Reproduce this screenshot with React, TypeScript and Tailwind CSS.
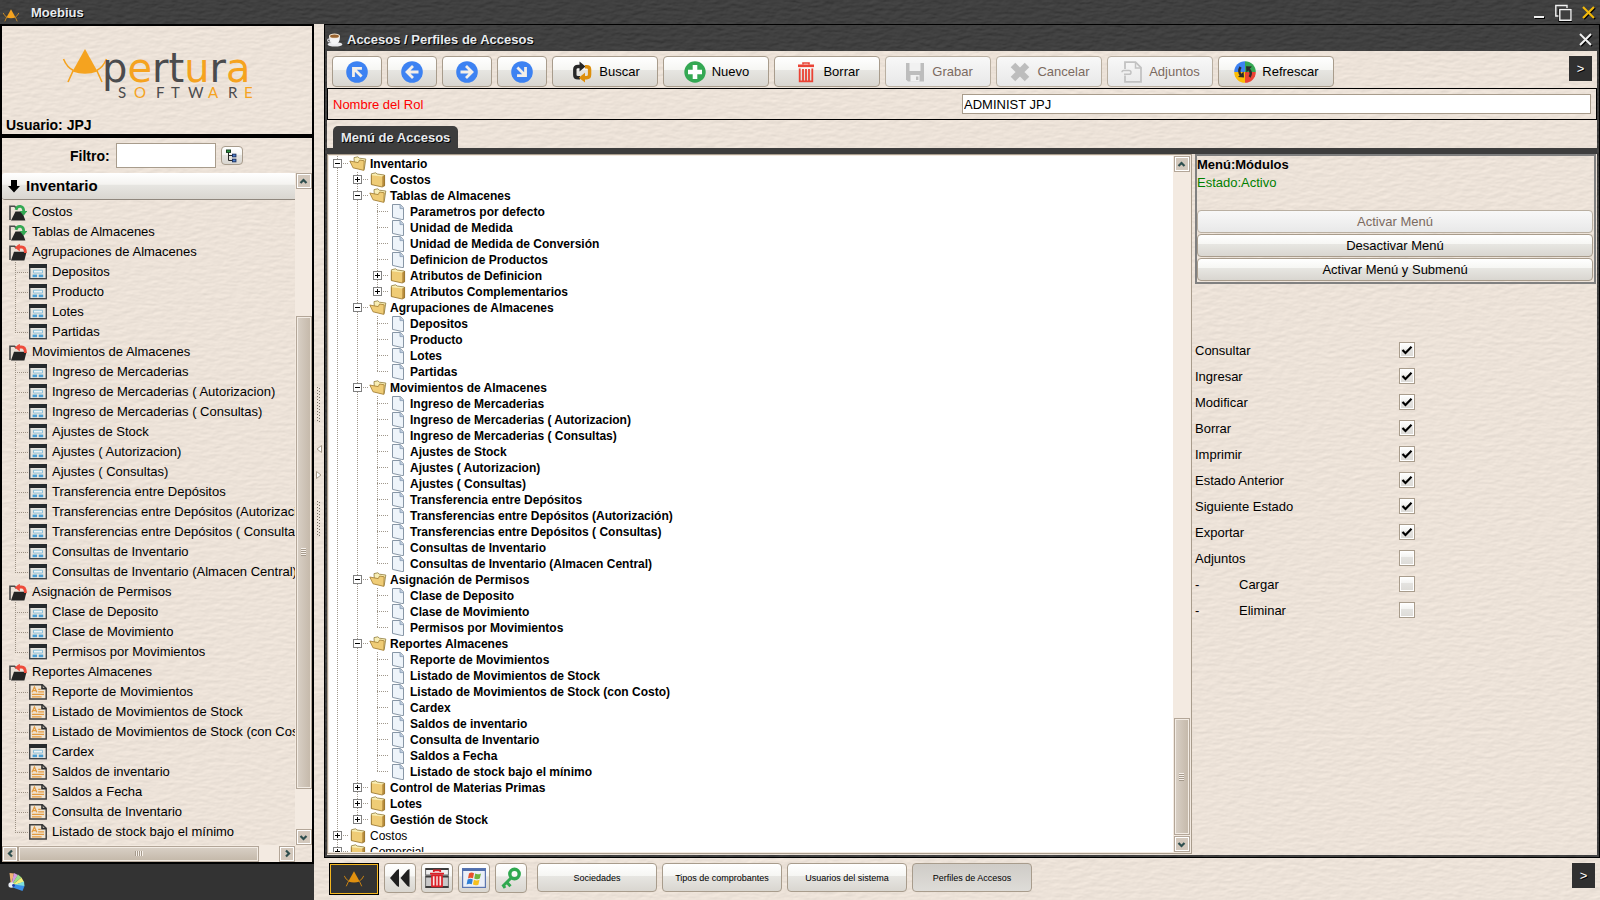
import type { ReactNode } from "react";
import clsx from "clsx";

type SideKind = "closed" | "open" | "form" | "report";
type SideItem = { label: string; kind: SideKind; last?: boolean };

const SIDE_ITEMS: SideItem[] = [
  { label: "Costos", kind: "closed" },
  { label: "Tablas de Almacenes", kind: "closed" },
  { label: "Agrupaciones de Almacenes", kind: "open" },
  { label: "Depositos", kind: "form" },
  { label: "Producto", kind: "form" },
  { label: "Lotes", kind: "form" },
  { label: "Partidas", kind: "form", last: true },
  { label: "Movimientos de Almacenes", kind: "open" },
  { label: "Ingreso de Mercaderias", kind: "form" },
  { label: "Ingreso de Mercaderias ( Autorizacion)", kind: "form" },
  { label: "Ingreso de Mercaderias ( Consultas)", kind: "form" },
  { label: "Ajustes de Stock", kind: "form" },
  { label: "Ajustes ( Autorizacion)", kind: "form" },
  { label: "Ajustes ( Consultas)", kind: "form" },
  { label: "Transferencia entre Depósitos", kind: "form" },
  { label: "Transferencias entre Depósitos (Autorización)", kind: "form" },
  { label: "Transferencias entre Depósitos ( Consultas)", kind: "form" },
  { label: "Consultas de Inventario", kind: "form" },
  { label: "Consultas de Inventario (Almacen Central)", kind: "form", last: true },
  { label: "Asignación de Permisos", kind: "open" },
  { label: "Clase de Deposito", kind: "form" },
  { label: "Clase de Movimiento", kind: "form" },
  { label: "Permisos por Movimientos", kind: "form", last: true },
  { label: "Reportes Almacenes", kind: "open" },
  { label: "Reporte de Movimientos", kind: "report" },
  { label: "Listado de Movimientos de Stock", kind: "report" },
  { label: "Listado de Movimientos de Stock (con Costo)", kind: "report" },
  { label: "Cardex", kind: "form" },
  { label: "Saldos de inventario", kind: "report" },
  { label: "Saldos a Fecha", kind: "report" },
  { label: "Consulta de Inventario", kind: "report" },
  { label: "Listado de stock bajo el mínimo", kind: "report", last: true },
  { label: "Control de Materias Primas", kind: "closed" },
];

type TreeNode = { label: string; folder?: boolean; plain?: boolean; children?: TreeNode[] };

const leaves = (...labels: string[]): TreeNode[] => labels.map((label) => ({ label }));

const TREE: TreeNode[] = [
  {
    label: "Inventario",
    folder: true,
    children: [
      { label: "Costos", folder: true },
      {
        label: "Tablas de Almacenes",
        folder: true,
        children: [
          ...leaves("Parametros por defecto", "Unidad de Medida", "Unidad de Medida de Conversión", "Definicion de Productos"),
          { label: "Atributos de Definicion", folder: true },
          { label: "Atributos Complementarios", folder: true },
        ],
      },
      { label: "Agrupaciones de Almacenes", folder: true, children: leaves("Depositos", "Producto", "Lotes", "Partidas") },
      {
        label: "Movimientos de Almacenes",
        folder: true,
        children: leaves(
          "Ingreso de Mercaderias",
          "Ingreso de Mercaderias ( Autorizacion)",
          "Ingreso de Mercaderias ( Consultas)",
          "Ajustes de Stock",
          "Ajustes ( Autorizacion)",
          "Ajustes ( Consultas)",
          "Transferencia entre Depósitos",
          "Transferencias entre Depósitos (Autorización)",
          "Transferencias entre Depósitos ( Consultas)",
          "Consultas de Inventario",
          "Consultas de Inventario (Almacen Central)",
        ),
      },
      {
        label: "Asignación de Permisos",
        folder: true,
        children: leaves("Clase de Deposito", "Clase de Movimiento", "Permisos por Movimientos"),
      },
      {
        label: "Reportes Almacenes",
        folder: true,
        children: leaves(
          "Reporte de Movimientos",
          "Listado de Movimientos de Stock",
          "Listado de Movimientos de Stock (con Costo)",
          "Cardex",
          "Saldos de inventario",
          "Consulta de Inventario",
          "Saldos a Fecha",
          "Listado de stock bajo el mínimo",
        ),
      },
      { label: "Control de Materias Primas", folder: true },
      { label: "Lotes", folder: true },
      { label: "Gestión de Stock", folder: true },
    ],
  },
  { label: "Costos", folder: true, plain: true },
  { label: "Comercial", folder: true, plain: true },
];

const PERMISSIONS = [
  { label: "Consultar", on: true },
  { label: "Ingresar", on: true },
  { label: "Modificar", on: true },
  { label: "Borrar", on: true },
  { label: "Imprimir", on: true },
  { label: "Estado Anterior", on: true },
  { label: "Siguiente Estado", on: true },
  { label: "Exportar", on: true },
  { label: "Adjuntos", on: false },
  { label: "Cargar", on: false, sub: true },
  { label: "Eliminar", on: false, sub: true },
];

const TASKS = ["Sociedades", "Tipos de comprobantes", "Usuarios del sistema", "Perfiles de Accesos"];

const RAISED =
  "rounded-[4px] border border-[#a89c8c] bg-[linear-gradient(#ffffff,#f6f6f3_44%,#e7e6e2_45%,#d9d6d0)]";
const FLAT = "rounded-[4px] border border-[#b9afa1] bg-[linear-gradient(#f8f8f8,#e8e8e8)] text-[#7b6a60]";
const GLOW = "[text-shadow:1px_1px_0_#000]";

/* ---------- surfaces ---------- */

function TextureDefs() {
  return (
    <svg width="0" height="0" className="absolute" aria-hidden="true">
      <filter id="paper" x="0" y="0" width="100%" height="100%" colorInterpolationFilters="sRGB">
        <feTurbulence type="fractalNoise" baseFrequency="0.09 0.28" numOctaves="4" seed="4" />
        <feDiffuseLighting surfaceScale="0.16" diffuseConstant="1.155" lightingColor="#ece2d8">
          <feDistantLight azimuth="60" elevation="60" />
        </feDiffuseLighting>
      </filter>
      <filter id="slate" x="0" y="0" width="100%" height="100%" colorInterpolationFilters="sRGB">
        <feTurbulence type="fractalNoise" baseFrequency="0.1 0.3" numOctaves="4" seed="9" />
        <feDiffuseLighting surfaceScale="0.6" diffuseConstant="1.155" lightingColor="#404040">
          <feDistantLight azimuth="60" elevation="60" />
        </feDiffuseLighting>
      </filter>
    </svg>
  );
}

function Texture({ kind }: { kind: "paper" | "slate" }) {
  return (
    <svg className="pointer-events-none absolute inset-0 -z-10 h-full w-full" aria-hidden="true">
      <rect width="100%" height="100%" filter={kind === "paper" ? "url(#paper)" : "url(#slate)"} />
    </svg>
  );
}

/* ---------- logos and icons ---------- */

function Mark({ className, color = "#f5a31f" }: { className?: string; color?: string }) {
  return (
    <svg viewBox="0 0 44 34" className={className} aria-hidden="true">
      <path d="M22 0 L34.5 22.5 Q22 27 9.5 22.5 Z" fill={color} />
      <path
        d="M0.5 10 Q4 18.5 10.5 21.5 M43.5 10 Q40 18.5 33.5 21.5 M10 22 L5 33 M34 22 L39 33"
        fill="none"
        stroke={color}
        strokeWidth="1.9"
      />
    </svg>
  );
}

function Logo() {
  return (
    <svg viewBox="0 0 192 54" className="h-[54px] w-48 overflow-visible" role="img" aria-label="Apertura Software">
      <path d="M22 1 L34.5 23.5 Q22 28 9.5 23.5 Z" fill="#f5a31f" />
      <path
        d="M0.5 11 Q4 19.5 10.5 22.5 M43.5 11 Q40 19.5 33.5 22.5 M10 23 L5 34 M34 23 L39 34"
        fill="none"
        stroke="#f5a31f"
        strokeWidth="1.6"
      />
      <text x="39" y="34" fontSize="40" fontFamily="'DejaVu Sans'" fill="#4b4b4d">
        p<tspan fill="#f5a31f">e</tspan>rt<tspan fill="#f5a31f">u</tspan>r<tspan fill="#f5a31f">a</tspan>
      </text>
      <text y="50" x="55 71 93 108 125 145 165 181" fontSize="15" fontFamily="Lato, sans-serif" fill="#4b4b4d">
        S<tspan fill="#f5a31f">O</tspan>FTW<tspan fill="#f5a31f">A</tspan>R<tspan fill="#f5a31f">E</tspan>
      </text>
    </svg>
  );
}

function ArrowIcon({ turn }: { turn: number }) {
  return (
    <svg viewBox="0 0 22 22" className="size-[22px]" aria-hidden="true">
      <circle cx="11" cy="11" r="10.8" fill="#3d82f2" />
      <g transform={`rotate(${turn} 11 11)`} fill="none" stroke="#f4efe9" strokeWidth="2.8">
        <path d="M17.5 11 H6.5 M12 5 L6 11 L12 17" />
      </g>
    </svg>
  );
}

function SearchIcon() {
  return (
    <svg viewBox="0 0 22 22" className="size-[22px]" aria-hidden="true">
      <path d="M9 16.8 H7 Q3.8 16.8 3.8 14 V8.5 Q3.8 5.5 7 5.5 H10" fill="none" stroke="#262626" strokeWidth="3.4" />
      <path d="M8.5 0.6 L14.5 5.5 L8.5 10.4 Z" fill="#262626" />
      <path d="M14 5.8 H15.5 Q18.6 5.8 18.6 8.5 V13.5 Q18.6 16.7 15.5 16.7 H12.5" fill="none" stroke="#dd8f0c" strokeWidth="3.4" />
      <path d="M14 11.8 L7.8 16.7 L14 21.6 Z" fill="#dd8f0c" />
    </svg>
  );
}

function PlusIcon() {
  return (
    <svg viewBox="0 0 22 22" className="size-[22px]" aria-hidden="true">
      <circle cx="11" cy="11" r="10.7" fill="#34a853" />
      <path d="M11 4 V18 M4 11 H18" stroke="#fff" strokeWidth="4.6" />
    </svg>
  );
}

function TrashIcon() {
  return (
    <svg viewBox="0 0 22 22" className="size-[22px]" fill="none" stroke="#ea4335" aria-hidden="true">
      <path d="M8 3.5 V2 H14 V3.5" strokeWidth="1.6" />
      <path d="M3 4.8 H19" strokeWidth="2.6" />
      <path d="M4.7 7.6 V20.3 H17.3 V7.6 M8 8 V20 M11 8 V20 M14 8 V20" strokeWidth="1.8" />
    </svg>
  );
}

function SaveIcon() {
  return (
    <svg viewBox="0 0 22 22" className="size-[22px]" aria-hidden="true">
      <path d="M2 2 H20 V20.5 H4 L2 18.5 Z" fill="#bdbdbd" />
      <path d="M5.5 2 H16.5 V10 H5.5 Z M6.5 14 H15.5 V20.5 H6.5 Z" fill="#f1f1f1" />
      <path d="M12 15.5 H14.4 V19 H12 Z" fill="#bdbdbd" />
    </svg>
  );
}

function CancelIcon() {
  return (
    <svg viewBox="0 0 22 22" className="size-[22px]" aria-hidden="true">
      <path d="M4 4 L18 18 M18 4 L4 18" stroke="#bdbdbd" strokeWidth="6.4" />
    </svg>
  );
}

function AttachIcon() {
  return (
    <svg viewBox="0 0 22 22" className="size-[22px]" fill="none" stroke="#c2c2c2" aria-hidden="true">
      <path d="M4 8 V1.2 H14.5 L20 6.7 V20.8 H4 V14.5" strokeWidth="1.8" />
      <path d="M14.5 1.5 V7 H20" strokeWidth="1.5" />
      <path d="M3 13.2 H8 Q10 13.2 10 11.4 Q10 9.4 8 9.4 H2.8 Q1 9.4 1 11.2" strokeWidth="1.5" />
    </svg>
  );
}

function RefreshIcon() {
  return (
    <svg viewBox="0 0 22 22" className="size-[22px]" aria-hidden="true">
      <path d="M11 11 V0.2 A10.8 10.8 0 0 0 0.2 11 Z" fill="#3d82f2" />
      <path d="M11 11 V0.2 A10.8 10.8 0 0 1 21.8 11 Z" fill="#34a853" />
      <path d="M11 11 V21.8 A10.8 10.8 0 0 1 0.2 11 Z" fill="#fbbc05" />
      <path d="M11 11 V21.8 A10.8 10.8 0 0 0 21.8 11 Z" fill="#ea4335" />
      <path d="M6.6 6 Q3.8 10.4 7 14.2 M15.6 16 Q18.2 12 15 8.4" fill="none" stroke="#2b2b2b" strokeWidth="2.4" />
      <path d="M4 16 L10 16.5 L9.6 10.4 Z M18 5.6 L12 5.2 L12.4 11.6 Z" fill="#2b2b2b" />
    </svg>
  );
}

function CupIcon() {
  return (
    <svg viewBox="0 0 16 14" className="h-3.5 w-4" aria-hidden="true">
      <ellipse cx="8" cy="11.4" rx="7.4" ry="2.2" fill="#e9e9ec" />
      <path d="M2 3 Q2 11.5 7.5 11.5 Q13 11.5 13 3 Z" fill="#f4f4f6" />
      <path d="M3.4 6 Q0.2 5.6 0.9 8 Q1.5 9.4 4.4 9" fill="none" stroke="#d8d8dc" strokeWidth="1.2" />
      <ellipse cx="7.5" cy="3" rx="5.5" ry="2.4" fill="#f1e3cf" />
      <ellipse cx="7.5" cy="3.2" rx="4.4" ry="1.6" fill="#9a6430" />
    </svg>
  );
}

function SideIcon({ kind }: { kind: SideKind }) {
  if (kind === "form") {
    return (
      <svg viewBox="0 0 18 16" className="h-4 w-[18px] shrink-0" aria-hidden="true">
        <rect x="0.7" y="0.7" width="16.6" height="14" fill="#e6e4de" stroke="#3f4347" strokeWidth="1.4" />
        <rect width="18" height="4" fill="#262a2d" />
        <path d="M4.5 6.2 H13.5 V9 H4.5 Z" fill="#eef3f5" stroke="#8cc0d8" strokeWidth="1" />
        <rect x="3.6" y="10.6" width="4.4" height="2.6" fill="#4b9fd3" />
        <rect x="9.8" y="10.6" width="4.4" height="2.6" fill="#4b9fd3" />
      </svg>
    );
  }
  if (kind === "report") {
    return (
      <svg viewBox="0 0 18 16" className="h-4 w-[18px] shrink-0" fill="none" aria-hidden="true">
        <path d="M0.8 0.8 H13.4 L17.2 4.4 V15 H0.8 Z" fill="#efe4d4" stroke="#3f3f3f" strokeWidth="1.5" />
        <path d="M13 0.8 V4.6 H17" stroke="#2e2e2e" strokeWidth="1.6" />
        <path d="M3 8.2 L5.4 3 L7.8 8.2 M4 6.6 H7" stroke="#e39b42" strokeWidth="1.3" />
        <path d="M9.2 5.4 H11.8 M9.2 7.8 H15 M3 10.4 H15 M3 12.8 H12.6" stroke="#e39b42" strokeWidth="1.3" />
      </svg>
    );
  }
  const open = kind === "open";
  return (
    <svg viewBox="0 0 18 17" className="h-[17px] w-[18px] shrink-0" fill="none" aria-hidden="true">
      <path d="M1 16 V2.2 H5.5 L7.5 4.4" stroke="#4a4a4a" strokeWidth="1.6" />
      {open ? (
        <>
          <path d="M2 16.4 L5 7.8 H17.6 L15.4 16.4 Z" fill="#242424" />
          <path d="M8.5 3 H12.5 Q16.4 3 16.4 9" stroke="#ee4b3b" strokeWidth="2.8" />
          <path d="M5.8 3.4 L10.8 -0.4 V7.4 Z" fill="#ee4b3b" />
        </>
      ) : (
        <>
          <path d="M2 16.4 L6.5 7.5 H13 L16.4 16.4 Z" fill="#242424" />
          <path d="M7 5.8 Q8 2 11.4 2.4 Q14.8 2.8 14.8 8" stroke="#34a853" strokeWidth="2.8" />
          <path d="M10.6 7 H18.2 L14.6 11.8 Z" fill="#34a853" />
        </>
      )}
    </svg>
  );
}

function NodeIcon({ node }: { node: TreeNode }) {
  if (!node.folder) {
    return (
      <svg viewBox="0 0 18 16" className="h-4 w-[18px] shrink-0" aria-hidden="true">
        <path d="M3.5 0.5 H11.4 L14.5 3.8 V15.5 H12.8 L3.5 13.4 Z" fill="#eef4fa" stroke="#8796a6" />
        <path d="M11 0.5 V4.6 H14.5" fill="#bccbdc" stroke="#8fa3ba" strokeWidth="0.9" />
      </svg>
    );
  }
  if (node.children) {
    return (
      <svg viewBox="0 0 18 16" className="h-4 w-[18px] shrink-0" aria-hidden="true">
        <path d="M5 1.6 L8.8 0.8 L10.4 2.2 L16.8 3 L15.2 13.6 L5.6 11.6 Z" fill="#f8eeb4" stroke="#8f7b3e" strokeWidth="0.8" />
        <path d="M0.8 5 L9.2 6.6 L10.6 4 L15.2 4.8 L14.8 14.4 L4 11.8 Z" fill="#efcc76" stroke="#a07a30" strokeWidth="0.8" />
      </svg>
    );
  }
  return (
    <svg viewBox="0 0 18 16" className="h-4 w-[18px] shrink-0" aria-hidden="true">
      <path d="M2.4 1.8 L6.6 0.8 L8.2 2 L15.4 3 V14 L2.4 12.2 Z" fill="#f8eeb4" stroke="#8f7b3e" strokeWidth="0.8" />
      <path d="M2.4 3.2 L13.2 4.4 V15 L2.4 12.6 Z" fill="#efcc76" />
      <path d="M13.2 4.4 L15.6 3 V13.6 L13.2 15 Z" fill="#b98c3a" />
      <path d="M2.4 3.2 V12.6 L13.2 15 L15.6 13.6 V3" fill="none" stroke="#96712b" strokeWidth="0.8" />
    </svg>
  );
}

function RewindIcon() {
  return (
    <svg viewBox="0 0 22 20" className="h-5 w-[22px]" aria-hidden="true">
      <path d="M10 1 V19 L8 18 L1 10 L8 2 Z M20.5 1 V19 L18.5 18 L11.5 10 L18.5 2 Z" fill="#1f1f1f" />
    </svg>
  );
}

function CloseAllIcon() {
  return (
    <svg viewBox="0 0 26 22" className="h-[22px] w-[26px]" aria-hidden="true">
      <rect x="1.6" y="1.6" width="22.8" height="6.4" fill="#efefef" stroke="#6b6b6b" />
      <rect x="1.6" y="9" width="22.8" height="11.5" fill="#c9c9c9" stroke="#6b6b6b" />
      <path d="M1.6 2 H24.4 M1.6 9.6 H24.4 M1.6 20 H24.4" stroke="#3c3c3c" strokeWidth="1.8" />
      <path d="M9.8 5 V3.4 H16.2 V5 M6 6.6 H20" fill="none" stroke="#dc1f26" strokeWidth="1.8" />
      <path d="M8 8.4 V19.4 H18 V8.4 Z M11.4 9 V19 M14.6 9 V19" fill="#f9e4e4" stroke="#dc1f26" strokeWidth="1.7" />
    </svg>
  );
}

function WindowsIcon() {
  return (
    <svg viewBox="0 0 24 20" className="h-5 w-6" aria-hidden="true">
      <rect x="0.6" y="0.6" width="22.8" height="18.8" fill="#eaeff8" stroke="#5b76b0" strokeWidth="1.2" />
      <rect x="0.6" y="0.6" width="22.8" height="2.4" fill="#4f6fae" />
      <path d="M7 5.4 Q9.4 3.8 12 5.2 L11 10.2 Q8.4 9 6 10.4 Z" fill="#e8502b" />
      <path d="M13.2 5.6 Q16 7 19 5.4 L17.8 10.6 Q15 11.8 12.2 10.5 Z" fill="#6fb43f" />
      <path d="M5.6 11.6 Q8.2 10.2 10.8 11.4 L9.8 16.2 Q7.2 15 4.6 16.6 Z" fill="#2f7fd6" />
      <path d="M11.9 11.8 Q14.6 13 17.5 11.8 L16.4 16.8 Q13.6 18 10.9 16.6 Z" fill="#f6bf1e" />
    </svg>
  );
}

function KeyIcon() {
  return (
    <svg viewBox="0 0 22 22" className="size-[22px]" fill="none" stroke="#2fa84f" aria-hidden="true">
      <circle cx="14.5" cy="7" r="4.7" strokeWidth="3.4" />
      <path d="M11.5 10.5 L2.5 19.5 M7 15.5 L10.5 19.2 M3 18 L5 21" strokeWidth="3" />
    </svg>
  );
}

function PaletteIcon() {
  return (
    <svg viewBox="0 0 18 20" className="h-5 w-[18px]" aria-hidden="true">
      <path d="M3 14 L1.5 1 L6 1.5 Z" fill="#f0b377" />
      <path d="M3 14 L6 1 L10 3 Z" fill="#d49be0" />
      <path d="M3 14 L10 2.5 L13.5 5.5 Z" fill="#9be08a" />
      <path d="M3 14 L13.5 5.5 L16 10 Z" fill="#f3f07c" />
      <path d="M3 14 L16 9.5 L16.5 14 Z" fill="#7fe0dc" />
      <path d="M3 12 L16.5 14 L14.5 19 L2 14.5 Z" fill="#3a8fe8" />
      <circle cx="3.2" cy="13" r="2.8" fill="#e9edf5" />
      <circle cx="5.5" cy="13.5" r="1.4" fill="#1c3fa8" />
    </svg>
  );
}

function FilterTreeIcon() {
  return (
    <svg viewBox="0 0 12 14" className="h-3.5 w-3" aria-hidden="true">
      <path d="M2.5 3 V11.5 H7 M2.5 6.5 H7" fill="none" stroke="#2b2b2b" />
      <rect x="0.5" y="1" width="4" height="2.4" fill="#2f9a45" stroke="#173f20" />
      <rect x="6.5" y="5.2" width="3.4" height="2.6" fill="#4a7fd0" stroke="#1d3464" />
      <rect x="6.5" y="10.2" width="3.4" height="2.6" fill="#4a7fd0" stroke="#1d3464" />
    </svg>
  );
}

/* ---------- controls ---------- */

function Chevron({ turn }: { turn: number }) {
  return (
    <svg viewBox="0 0 9 9" className="size-[9px]" aria-hidden="true">
      <path d="M1.5 6 L4.5 3 L7.5 6" transform={`rotate(${turn} 4.5 4.5)`} fill="none" stroke="#2f4f4f" strokeWidth="2.2" />
    </svg>
  );
}

type ScrollbarProps = { axis: "x" | "y"; before: number; size: number; after: number };

function Scrollbar({ axis, before, size, after }: ScrollbarProps) {
  const vertical = axis === "y";
  const end =
    "flex size-4 shrink-0 items-center justify-center border border-[#b3a698] bg-[#d3c8bc] shadow-[inset_1px_1px_0_#fff,inset_-1px_-1px_0_#fff]";
  return (
    <div className={clsx("flex shrink-0 bg-[#f3eae1]", vertical ? "w-[17px] flex-col items-center" : "h-[17px] items-center")}>
      <button type="button" className={end} aria-label={vertical ? "Subir" : "Izquierda"}>
        <Chevron turn={vertical ? 0 : -90} />
      </button>
      <div className="basis-0" style={{ flexGrow: before }} />
      <div
        style={{ flexGrow: size }}
        className={clsx(
          "flex basis-0 items-center justify-center border border-[#b3a698] shadow-[inset_1px_1px_0_#f3ece4,inset_-1px_-1px_0_#f3ece4]",
          vertical
            ? "w-4 flex-col bg-[linear-gradient(90deg,#d9d0c6,#c4b8a9)]"
            : "h-4 bg-[linear-gradient(#d9d0c6,#c4b8a9)]",
        )}
      >
        <svg viewBox="0 0 8 8" className={clsx("size-2", !vertical && "rotate-90")} shapeRendering="crispEdges" aria-hidden="true">
          <path d="M1 0.5 H6 M1 2.5 H6 M1 4.5 H6 M1 6.5 H6" stroke="#f6f0ea" />
          <path d="M1 1.5 H6 M1 3.5 H6 M1 5.5 H6 M1 7.5 H6" stroke="#a59a8c" />
        </svg>
      </div>
      <div className="basis-0" style={{ flexGrow: after }} />
      <button type="button" className={end} aria-label={vertical ? "Bajar" : "Derecha"}>
        <Chevron turn={vertical ? 180 : 90} />
      </button>
    </div>
  );
}

function ToolButton({ icon, children, disabled, wide }: { icon: ReactNode; children: ReactNode; disabled?: boolean; wide?: boolean }) {
  return (
    <button
      type="button"
      disabled={disabled}
      className={clsx(
        "flex h-[31px] items-center justify-center gap-1.5 pt-[1px] pl-[1px]",
        wide ? "w-[116px]" : "w-[106px]",
        disabled ? FLAT : RAISED,
      )}
    >
      {icon}
      {children}
    </button>
  );
}

function MoreButton() {
  return (
    <button type="button" className={clsx("h-[25px] w-[23px] bg-[#303030] leading-4 text-white", GLOW)}>
      &gt;
    </button>
  );
}

/* ---------- sidebar ---------- */

function SideRow({ item }: { item: SideItem }) {
  const child = item.kind === "form" || item.kind === "report";
  return (
    <li className="flex h-5 items-center pl-[7px] whitespace-nowrap">
      {child && (
        <svg viewBox="0 0 20 20" className="size-5 shrink-0" shapeRendering="crispEdges" aria-hidden="true">
          <path d={item.last ? "M6.5 0 V10" : "M6.5 0 V20"} stroke="#9c9184" strokeDasharray="1 1" />
          <path d="M6 10.5 H19" stroke="#9c9184" strokeDasharray="1 1" />
        </svg>
      )}
      <SideIcon kind={item.kind} />
      <a href="#" className="ml-[5px]">
        {item.label}
      </a>
    </li>
  );
}

function Sidebar() {
  return (
    <aside className="flex w-[314px] shrink-0 flex-col">
      <div className="flex h-28 shrink-0 flex-col border-2 border-black">
        <div className="flex justify-center pt-[22px] pl-1">
          <Logo />
        </div>
        <p className="mt-auto pb-[1px] pl-1 text-sm leading-4 font-bold">Usuario: JPJ</p>
      </div>
      <div className="flex min-h-0 grow flex-col border-2 border-black">
        <div className="flex h-[35px] shrink-0 items-center pl-[68px]">
          <label htmlFor="filtro" className="text-sm font-bold">
            Filtro:
          </label>
          <input id="filtro" className="ml-1.5 h-[25px] w-[100px] border border-[#a89c8c] bg-white px-1" />
          <button type="button" aria-label="Filtrar" className={clsx("ml-[5px] flex h-[19px] w-[22px] items-center justify-center", RAISED)}>
            <FilterTreeIcon />
          </button>
        </div>
        <div className="flex min-h-0 grow">
          <div className="flex min-w-0 grow flex-col overflow-hidden">
            <h2 className="flex h-[27px] shrink-0 items-center rounded-l-[3px] border-b border-[#8f877d] bg-[linear-gradient(#ffffff,#f4f3f0_44%,#e7e6e2_45%,#d9d6d0)] pl-1.5 text-[15px] font-bold">
              <svg viewBox="0 0 12 14" className="mr-1.5 h-3.5 w-3" aria-hidden="true">
                <path d="M3 1 H9 V7 H12 L6 13.5 L0 7 H3 Z" fill="#000" />
              </svg>
              Inventario
            </h2>
            <ul className="h-0 grow overflow-hidden pt-[2px]">
              {SIDE_ITEMS.map((item) => (
                <SideRow key={item.label} item={item} />
              ))}
            </ul>
          </div>
          <Scrollbar axis="y" before={127} size={472} after={40} />
        </div>
        <div className="flex shrink-0">
          <div className="min-w-0 grow">
            <Scrollbar axis="x" before={0} size={240} after={20} />
          </div>
          <div className="w-[17px] shrink-0" />
        </div>
      </div>
      <div className="flex h-9 shrink-0 items-center bg-[#333] pl-2">
        <PaletteIcon />
      </div>
    </aside>
  );
}

function Grip() {
  return (
    <svg viewBox="0 0 4 36" className="h-9 w-1" shapeRendering="crispEdges" aria-hidden="true">
      <path d="M0.5 0 V36" stroke="#7d746a" strokeDasharray="1 2" />
      <path d="M2.5 1 V36" stroke="#7d746a" strokeDasharray="1 2" />
    </svg>
  );
}

function Splitter() {
  return (
    <div className="flex w-2.5 shrink-0 flex-col items-center justify-center">
      <Grip />
      <svg viewBox="0 0 6 8" className="mt-[22px] h-2 w-1.5" aria-hidden="true">
        <path d="M5.5 0.5 V7.5 L1 4 Z" fill="#fff" stroke="#a89c8c" />
      </svg>
      <svg viewBox="0 0 6 8" className="mt-[18px] mb-[22px] h-2 w-1.5" aria-hidden="true">
        <path d="M0.5 0.5 V7.5 L5 4 Z" fill="#fff" stroke="#a89c8c" />
      </svg>
      <Grip />
    </div>
  );
}

/* ---------- access tree ---------- */

// One 20px column of dotted connector per level; "rails" tells which ancestors still continue below.
function TreeRows({ nodes, rails = [] }: { nodes: TreeNode[]; rails?: boolean[] }) {
  return (
    <>
      {nodes.map((node, i) => {
        const last = i === nodes.length - 1;
        return (
          <li key={node.label}>
            <div className={clsx("flex h-4 items-center text-xs leading-4 whitespace-nowrap", !node.plain && "font-bold")}>
              {rails.map((on, r) => (
                <svg key={r} viewBox="0 0 20 16" className="h-4 w-5 shrink-0" shapeRendering="crispEdges" aria-hidden="true">
                  {on && <path d="M8.5 0 V16" stroke="#a0988c" strokeDasharray="1 1" />}
                </svg>
              ))}
              <svg viewBox="0 0 20 16" className="h-4 w-5 shrink-0" shapeRendering="crispEdges" aria-hidden="true">
                <path d={last ? "M8.5 0 V8" : "M8.5 0 V16"} stroke="#a0988c" strokeDasharray="1 1" />
                <path d="M8 7.5 H20" stroke="#a0988c" strokeDasharray="1 1" />
                {node.folder && (
                  <>
                    <rect x="4.5" y="3.5" width="8" height="8" fill="#fff" stroke="#808080" />
                    <path d={node.children ? "M6 7.5 H11" : "M6 7.5 H11 M8.5 5 V10"} stroke="#000" />
                  </>
                )}
              </svg>
              <NodeIcon node={node} />
              <span className="ml-[3px]">{node.label}</span>
            </div>
            {node.children && (
              <ul>
                <TreeRows nodes={node.children} rails={[...rails, !last]} />
              </ul>
            )}
          </li>
        );
      })}
    </>
  );
}

function AccessTree() {
  return (
    <div className="mb-[1px] flex min-w-0 grow border border-[#a89c8c] bg-[#f3eae1] p-[1px]">
      <ul className="h-full min-w-0 grow overflow-hidden bg-white">
        <TreeRows nodes={TREE} />
      </ul>
      <Scrollbar axis="y" before={547} size={115} after={1} />
    </div>
  );
}

function Permission({ label, on, sub }: { label: string; on: boolean; sub?: boolean }) {
  const id = `perm-${label.toLowerCase().replace(/\s/g, "-")}`;
  return (
    <div className="flex h-[26px] items-center">
      <label htmlFor={id} className="flex w-[204px] pt-[1px]">
        {sub && <span className="w-11">-</span>}
        {label}
      </label>
      <span className="grid size-4 place-items-center">
        <input
          id={id}
          type="checkbox"
          defaultChecked={on}
          className="peer col-start-1 row-start-1 size-4 appearance-none border border-[#a89c8c] bg-[linear-gradient(#fff,#f2f2f0_45%,#e4e3e0_46%,#dddbd7)] shadow-[inset_0_0_0_1px_#fff]"
        />
        <svg
          viewBox="0 0 12 12"
          className="pointer-events-none invisible col-start-1 row-start-1 size-3 peer-checked:visible"
          aria-hidden="true"
        >
          <path d="M1.5 6 L4.5 9 L10.5 2.8" fill="none" stroke="#000" strokeWidth="2.2" />
        </svg>
      </span>
    </div>
  );
}

function DetailPanel() {
  return (
    <div className="mr-[1px] ml-[3px] w-[401px] shrink-0">
      <section className="border-2 border-[#808080] pb-[1px]">
        <h3 className="h-[18px] leading-[18px] font-bold">Menú:Módulos</h3>
        <p className="h-[18px] leading-[18px] text-[#008000]">Estado:Activo</p>
        <div className="mt-[18px] mr-[1px] flex flex-col gap-[1px]">
          <button type="button" disabled className={clsx("h-[23px] pt-[1px]", FLAT)}>
            Activar Menú
          </button>
          <button type="button" className={clsx("h-[23px] pt-[1px]", RAISED)}>
            Desactivar Menú
          </button>
          <button type="button" className={clsx("h-[23px] pt-[1px]", RAISED)}>
            Activar Menú y Submenú
          </button>
        </div>
      </section>
      <div className="mt-[53px]">
        {PERMISSIONS.map((p) => (
          <Permission key={p.label} {...p} />
        ))}
      </div>
    </div>
  );
}

function Workspace() {
  return (
    <section className="relative isolate flex min-h-0 grow flex-col border border-black px-[2px] pb-[2px]">
      <Texture kind="slate" />
      <header className="flex h-[26px] shrink-0 items-center gap-1 pt-[3px] pr-[3px]">
        <CupIcon />
        <h1 className={clsx("font-bold text-[#e8ebee]", GLOW)}>Accesos / Perfiles de Accesos</h1>
        <button type="button" aria-label="Cerrar" className="ml-auto p-[1px]">
          <svg viewBox="0 0 14 14" className="size-3.5" aria-hidden="true">
            <path d="M2 2 L13 13 M13 2 L2 13" stroke="#000" strokeWidth="2" />
            <path d="M1 1 L12 12 M12 1 L1 12" stroke="#f1f1f1" strokeWidth="2" />
          </svg>
        </button>
      </header>
      <div className="relative isolate flex min-h-0 grow flex-col">
        <Texture kind="paper" />
        <div className="flex h-[37px] shrink-0 gap-[5px] px-[5px] pt-[5px]">
          {[45, 0, 180, 225].map((turn) => (
            <button key={turn} type="button" className={clsx("flex h-[31px] w-[50px] items-center justify-center", RAISED)}>
              <ArrowIcon turn={turn} />
            </button>
          ))}
          <ToolButton icon={<SearchIcon />}>Buscar</ToolButton>
          <ToolButton icon={<PlusIcon />}>Nuevo</ToolButton>
          <ToolButton icon={<TrashIcon />}>Borrar</ToolButton>
          <ToolButton icon={<SaveIcon />} disabled>
            Grabar
          </ToolButton>
          <ToolButton icon={<CancelIcon />} disabled>
            Cancelar
          </ToolButton>
          <ToolButton icon={<AttachIcon />} disabled>
            Adjuntos
          </ToolButton>
          <ToolButton icon={<RefreshIcon />} wide>
            Refrescar
          </ToolButton>
          <div className="ml-auto">
            <MoreButton />
          </div>
        </div>
        <form className="grid h-8 shrink-0 grid-cols-2 items-center border border-black px-[5px]">
          <label htmlFor="rol" className="pt-[1px] text-[#ff0000]">
            Nombre del Rol
          </label>
          <input id="rol" defaultValue="ADMINIST JPJ" className="h-5 border border-[#a89c8c] bg-white px-[1px]" />
        </form>
        <div className="flex h-7 shrink-0 items-end pl-1.5" role="tablist">
          <button
            type="button"
            role="tab"
            aria-selected="true"
            className={clsx("h-[22px] rounded-t-[5px] bg-[#3d3d3d] px-2 pt-[1px] font-bold text-[#e8ebee]", GLOW)}
          >
            Menú de Accesos
          </button>
        </div>
        <div className="h-1.5 shrink-0 bg-[#3d3d3d]" />
        <div className="flex min-h-0 grow">
          <AccessTree />
          <DetailPanel />
        </div>
      </div>
    </section>
  );
}

function Taskbar() {
  const tool = clsx("flex h-[30px] w-8 items-center justify-center", RAISED);
  return (
    <footer className="flex h-[42px] shrink-0 items-start gap-[5px] px-[5px] pt-[5px]">
      <button
        type="button"
        aria-label="Moebius"
        className="flex h-8 w-[50px] items-center justify-center border border-black bg-[#333] shadow-[inset_0_0_0_1px_#f5b61f]"
      >
        <Mark className="h-4 w-5" color="#e0900f" />
      </button>
      <button type="button" aria-label="Anterior" className={tool}>
        <RewindIcon />
      </button>
      <button type="button" aria-label="Cerrar todo" className={tool}>
        <CloseAllIcon />
      </button>
      <button type="button" aria-label="Ventanas" className={tool}>
        <WindowsIcon />
      </button>
      <button type="button" aria-label="Clave" className={tool}>
        <KeyIcon />
      </button>
      <nav className="ml-[5px] flex gap-[5px]">
        {TASKS.map((task) => (
          <button
            key={task}
            type="button"
            className={clsx(
              "h-[29px] w-[120px] text-[9px]",
              task === "Perfiles de Accesos"
                ? "rounded-[4px] border border-[#a89c8c] bg-[linear-gradient(#cfccc7,#dedcd8)]"
                : RAISED,
            )}
          >
            {task}
          </button>
        ))}
      </nav>
      <div className="ml-auto">
        <MoreButton />
      </div>
    </footer>
  );
}

function TitleBar() {
  return (
    <header className="relative isolate flex h-6 shrink-0 items-center pl-[3px]">
      <Texture kind="slate" />
      <Mark className="mt-1.5 h-[13px] w-4" />
      <span className={clsx("ml-3 pt-[2px] font-bold text-[#e8ebee]", GLOW)}>Moebius</span>
      <div className="ml-auto flex items-center gap-2.5 pt-[1px] pr-1">
        <button type="button" aria-label="Minimizar">
          <svg viewBox="0 0 11 18" className="h-[18px] w-[11px]" aria-hidden="true">
            <path d="M1 14 H11" stroke="#000" strokeWidth="2" />
            <path d="M0 13 H10" stroke="#f1f1f1" strokeWidth="2" />
          </svg>
        </button>
        <button type="button" aria-label="Restaurar">
          <svg viewBox="0 0 17 18" className="h-[18px] w-[17px]" fill="none" aria-hidden="true">
            <path d="M4.5 12 H0.8 V1.5 H12 V4.5" stroke="#f1f1f1" strokeWidth="1.4" />
            <path d="M4.8 5.5 H16 V16.6 H4.8 Z" stroke="#000" strokeWidth="2.6" />
            <path d="M4.8 5.5 H16 V16.2 H4.8 Z" fill="#3f3f3f" stroke="#f1f1f1" strokeWidth="1.4" />
          </svg>
        </button>
        <button type="button" aria-label="Salir">
          <svg viewBox="0 0 14 14" className="size-3.5" aria-hidden="true">
            <path d="M2 2 L13 13 M13 2 L2 13" stroke="#000" strokeWidth="2" />
            <path d="M1 1 L12 12 M12 1 L1 12" stroke="#f2b90c" strokeWidth="2.2" />
          </svg>
        </button>
      </div>
    </header>
  );
}

export default function App() {
  return (
    <div className="relative isolate flex h-screen flex-col overflow-hidden bg-[#ece1d7] font-['Liberation_Sans',Arial,sans-serif] text-[13px] leading-4 text-black">
      <TextureDefs />
      <Texture kind="paper" />
      <TitleBar />
      <div className="flex min-h-0 grow">
        <Sidebar />
        <Splitter />
        <main className="flex min-w-0 grow flex-col">
          <Workspace />
          <Taskbar />
        </main>
      </div>
    </div>
  );
}
